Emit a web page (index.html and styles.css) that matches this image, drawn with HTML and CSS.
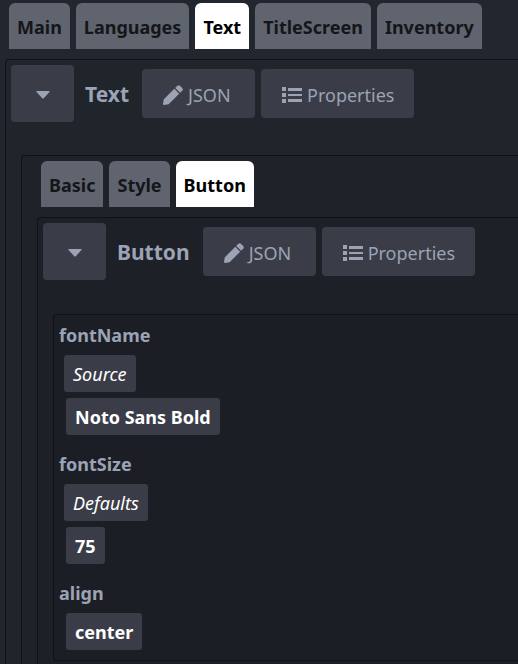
FILE: index.html
```html
<!DOCTYPE html>
<html lang="en">
<head>
<meta charset="utf-8">
<meta name="viewport" content="width=device-width, initial-scale=1">
<title>Text editor</title>
<link rel="stylesheet" href="styles.css">
</head>
<body>
<svg class="sprite" aria-hidden="true">
  <symbol id="pencil" viewBox="0 0 20 20"><path d="M11.3 3.8 16.2 8.7 5.6 19.2 1 20Q0 20 0 19L.8 14.3ZM12.2 2.9 14.3.8Q15.6-.4 16.9.8L19.2 3.1Q20.4 4.4 19.2 5.7L17.1 7.8Z"/></symbol>
  <symbol id="list" viewBox="0 0 20 16"><path d="M0 0h4v4H0zM0 6h4v4H0zM0 12h4v4H0zM6 1h14v3H6zM6 7h14v2H6zM6 12h14v3H6z"/></symbol>
  <symbol id="caret" viewBox="0 0 14 8"><path d="M1 0h12q1 0 .5 1L8 7q-1 1-2 0L.5 1Q0 0 1 0z"/></symbol>
</svg>
<nav class="tabs">
  <button class="tab">Main</button>
  <button class="tab">Languages</button>
  <button class="tab active">Text</button>
  <button class="tab">TitleScreen</button>
  <button class="tab">Inventory</button>
</nav>
<section class="panel outer">
  <header class="toolbar">
    <button class="btn toggle" aria-label="Collapse Text"><svg class="caret"><use href="#caret"/></svg></button>
    <h2>Text</h2>
    <button class="btn"><svg class="icon"><use href="#pencil"/></svg>JSON</button>
    <button class="btn"><svg class="icon"><use href="#list"/></svg>Properties</button>
  </header>
  <section class="panel group">
    <nav class="tabs">
      <button class="tab">Basic</button>
      <button class="tab">Style</button>
      <button class="tab active">Button</button>
    </nav>
    <section class="panel inner">
      <header class="toolbar">
        <button class="btn toggle" aria-label="Collapse Button"><svg class="caret"><use href="#caret"/></svg></button>
        <h2>Button</h2>
        <button class="btn"><svg class="icon"><use href="#pencil"/></svg>JSON</button>
        <button class="btn"><svg class="icon"><use href="#list"/></svg>Properties</button>
      </header>
      <dl class="panel fields">
        <div class="field">
          <dt>fontName</dt>
          <dd class="origin">Source</dd>
          <dd class="value">Noto Sans Bold</dd>
        </div>
        <div class="field">
          <dt>fontSize</dt>
          <dd class="origin">Defaults</dd>
          <dd class="value">75</dd>
        </div>
        <div class="field">
          <dt>align</dt>
          <dd class="value">center</dd>
        </div>
      </dl>
    </section>
  </section>
</section>
</body>
</html>
```

FILE: styles.css
```css
* { box-sizing: border-box; }
html { background: #22262e; scrollbar-width: none; }
body {
  margin: 0;
  padding: 3px 0 5px 5px;
  color: #9ba3b4;
  font: 18px/30px "Noto Sans", "Open Sans", sans-serif;
}
.sprite { display: none; }
button { border: 0; font: inherit; white-space: nowrap; }

.tabs { display: flex; gap: 6px; padding-left: 4px; }
.tab {
  height: 46px;
  padding: 2px 8px 0;
  border-radius: 6px 6px 0 0;
  background: #5f646f;
  color: #14161a;
  font-weight: 700;
}
.tab.active { background: #fff; color: #000; }

.panel {
  border: 1px solid #101216;
  border-right: 0;
  border-radius: 4px 0 0 4px;
  padding: 5px 0 5px 5px;
}
.outer { margin-top: 10px; background: #20242b; }
.group { margin: 33px 0 10px 10px; padding-left: 15px; background: #1f2229; }
.inner { margin-top: 10px; background: #1d2027; }
.fields { margin: 34px 0 10px 10px; padding-bottom: 10px; background: #1c1e26; }

.toolbar { display: flex; align-items: center; gap: 6px; }
.btn {
  display: flex;
  align-items: center;
  justify-content: flex-start;
  gap: 5px;
  min-width: 113px;
  height: 49px;
  padding: 2px 20px 0 21px;
  border-radius: 4px;
  background: #3a3d47;
  color: #9ba3b4;
}
.toggle { justify-content: center; min-width: 63px; height: 57px; padding: 2px 0 0; }
.icon { width: 20px; height: 20px; fill: currentColor; }
.caret { width: 14px; height: 8px; fill: currentColor; }
h2 { margin: 0 7px 0 5px; font-size: 21px; line-height: 30px; }

.field { display: flex; flex-direction: column; align-items: flex-start; }
.field + .field { margin-top: 14px; }
dt { margin-bottom: 5px; font-weight: 700; }
dd {
  margin: 0;
  padding: 4px 9px 3px;
  border-radius: 3px;
  background: #3a3d47;
  color: #fff;
}
.origin { margin: 0 0 6px 5px; font-style: italic; }
.value { margin-left: 7px; font-weight: 700; }
```
